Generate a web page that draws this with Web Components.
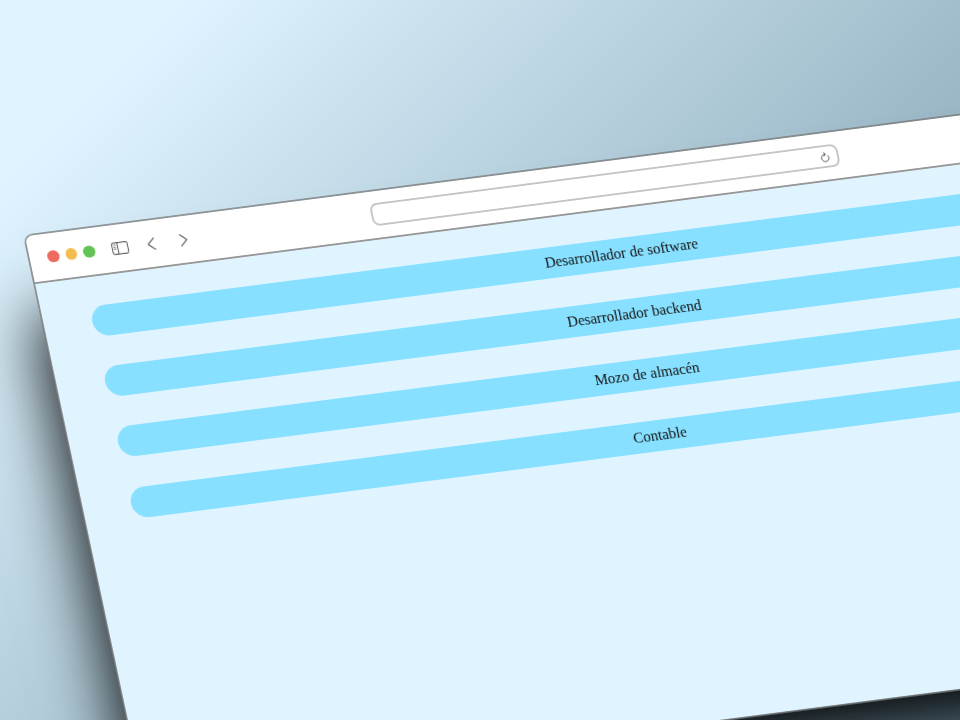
<!DOCTYPE html>
<html lang="es">
<head>
<meta charset="utf-8">
<title>Ofertas</title>
<style>
html,body{margin:0;height:100%;overflow:hidden}
</style>
</head>
<body>
<app-stage>
  <browser-window>
    <job-list>
      <job-item>Desarrollador de software</job-item>
      <job-item>Desarrollador backend</job-item>
      <job-item>Mozo de almacén</job-item>
      <job-item>Contable</job-item>
    </job-list>
  </browser-window>
</app-stage>
<script>
const define = (name, html) => customElements.define(name, class extends HTMLElement {
  constructor() {
    super();
    this.attachShadow({mode: 'open'}).innerHTML = html;
  }
});

define('app-stage', `<style>
:host{display:block;width:960px;height:720px;overflow:hidden;
background:linear-gradient(135deg,#dff4ff 0%,#dff4ff 11%,#6a8c9d 100%)}
</style><slot></slot>`);

define('browser-window', `<style>
:host{display:flex;flex-direction:column;box-sizing:border-box;width:1254px;height:624px;
border:2px solid rgba(118,118,118,.72);border-radius:10px;background:#dff4ff;background-clip:padding-box;
transform-origin:0 0;transform:matrix(.92,-.119,.1915,.9,22.8,234.8);will-change:transform;
box-shadow:-34px 62px 66px -30px rgba(0,0,0,.95)}
.content{flex:1;padding:31.5px 48px 30px 52px}
</style><window-toolbar></window-toolbar><div class="content"><slot></slot></div>`);

define('window-toolbar', `<style>
:host{display:grid;grid-template-columns:1fr 508px 1fr;align-items:center;box-sizing:border-box;height:53px;
background:#fff;border-bottom:2px solid #979797;border-radius:8px 8px 0 0}
.left{display:flex;align-items:center;padding-left:19px;color:#5f5f5f}
.dots{display:flex;gap:7px;margin-right:18px}
i{width:12.5px;height:12.5px;border-radius:50%}
svg{display:block;fill:none;stroke:currentColor}
.side{margin-right:20px}.back{margin-right:25px}
</style>
<div class="left">
<div class="dots"><i style="background:#ed6a5e"></i><i style="background:#f4bd4f"></i><i style="background:#61c454"></i></div>
<svg class="side" width="18" height="14" viewBox="0 0 18 14" stroke-width="1.1"><rect x=".6" y=".6" width="16.8" height="12.8" rx="1.8"/><path d="M6.5 .6v12.8M2.5 3h2M2.5 5.2h2M2.5 7.4h2"/></svg>
<svg class="back" width="10" height="14" viewBox="0 0 10 14" stroke-width="1.2" stroke-linecap="round" stroke-linejoin="round"><path d="M8.4 .8 1.5 7l6.9 6.2"/></svg>
<svg width="10" height="14" viewBox="0 0 10 14" stroke-width="1.2" stroke-linecap="round" stroke-linejoin="round"><path d="M1.6 .8l6.9 6.2-6.9 6.2"/></svg>
</div>
<address-bar></address-bar>`);

define('address-bar', `<style>
:host{display:flex;align-items:center;justify-content:flex-end;box-sizing:border-box;height:25px;
border:2px solid #c4c4c4;border-radius:8px;padding-right:8px;color:#555}
svg{display:block;fill:none;stroke:currentColor}
</style><svg width="10" height="12" viewBox="0 0 10 12" stroke-width="1" stroke-linecap="round" stroke-linejoin="round"><path d="M5.4 3.2A4 4 0 1 0 8.5 5M4.4 1.1 6.2 3.2 4.1 5"/></svg>`);

define('job-list', `<style>
:host{display:flex;flex-direction:column;gap:33.4px}
</style><slot></slot>`);

define('job-item', `<style>
:host{display:flex;align-items:center;justify-content:center;box-sizing:border-box;height:34px;
border-radius:17px;background:#87e0ff;color:#111;font:16px/18px "Liberation Serif",serif}
</style><slot></slot>`);
</script>
</body>
</html>
